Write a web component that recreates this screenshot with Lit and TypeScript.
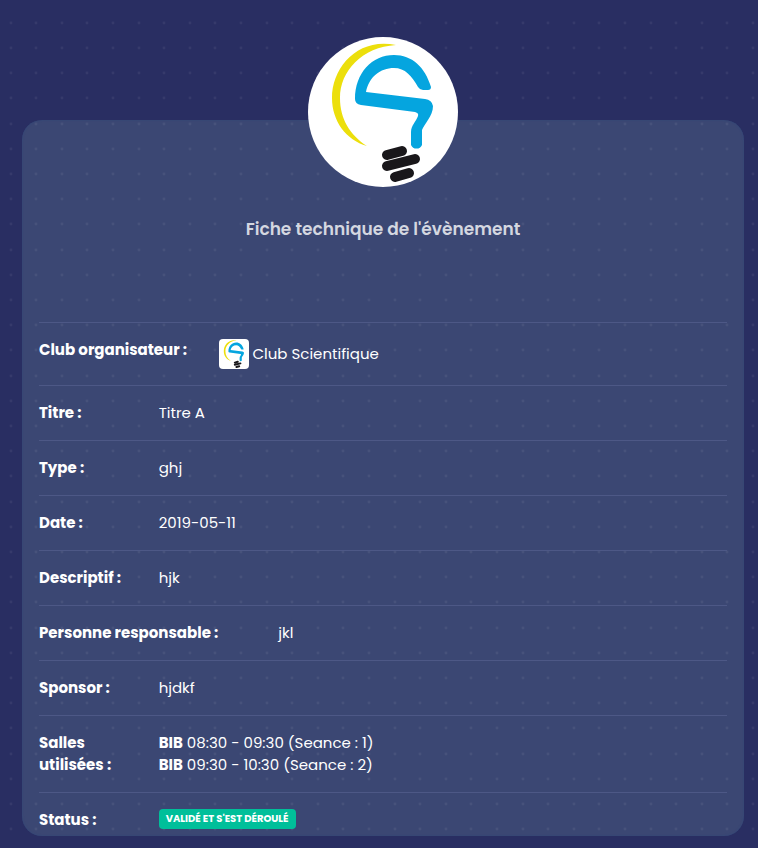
import { LitElement, html, svg, css } from "lit";
import { customElement } from "lit/decorators.js";

const DOT_X = [11, 36, 62, 87, 113];
const DOT_Y = [23, 48, 73, 98, 124];

const logo = html`<svg class="logo" viewBox="0 0 150 150" role="img" aria-label="Club Scientifique">
  <rect width="150" height="150" fill="#fff" />
  <path fill="#ecdf0c" d="M88 8C50 0 24 30 24 61C24 84 38 103 59 109C42 98 32 82 32 61C32 34 54 10 88 8Z" />
  <path fill="#05a5df"
    d="M123 50C117 30 104 18 86 18C64 18 47 36 47 62Q47 67 53 68L107 75Q111 76 110 79C108 85 103 88 103 95V108A6 6 0 0 0 114 108V93C116 87 125 79 125 69Q124 63 117 62L58 55C61 40 72 31 86 31C97 31 104 39 110 50Q112 53 115 53H120Q123 53 123 50Z" />
  <path fill="none" stroke="#19171a" stroke-width="10" stroke-linecap="round"
    d="M79 118L94 114M79 129L107 122M87 140L101 136" />
</svg>`;

const rows = [
  { label: "Club organisateur :", size: "c3", value: html`<span class="club">${logo}<span>Club Scientifique</span></span>` },
  { label: "Titre :", size: "c2", value: "Titre A" },
  { label: "Type :", size: "c2", value: "ghj" },
  { label: "Date :", size: "c2", value: "2019-05-11" },
  { label: "Descriptif :", size: "c2", value: "hjk" },
  { label: "Personne responsable :", size: "c4", value: "jkl" },
  { label: "Sponsor :", size: "c2", value: "hjdkf" },
  {
    label: "Salles utilisées :",
    size: "c2",
    value: html`<b>BIB</b> 08:30 - 09:30 (Seance : 1)<br /><b>BIB</b> 09:30 - 10:30 (Seance : 2)`,
  },
  { label: "Status :", size: "c2", value: html`<span class="badge">Validé et s'est déroulé</span>` },
];

@customElement("app-root")
export class AppRoot extends LitElement {
  static styles = css`
    :host {
      display: block;
      position: relative;
      min-height: 100vh;
      box-sizing: border-box;
      padding: 120px 14px 12px 22px;
      background: #292e62;
      color: #fff;
      font: 15px/22px Poppins, Inter, sans-serif;
    }
    .dots {
      position: absolute;
      inset: 0;
      width: 100%;
      height: 100%;
      pointer-events: none;
    }
    .card {
      display: flex;
      flex-direction: column;
      border-radius: 20px;
      padding: 0 17px 5px;
      background: #3b4773;
      box-shadow: inset 0 0 2px #30497b;
    }
    /* The dotted pattern lies over the card's fill; the content sits above it. */
    .head,
    .list {
      position: relative;
    }
    .avatar {
      width: 150px;
      height: 150px;
      margin: 0 auto;
      border-radius: 50%;
      overflow: hidden;
    }
    .head {
      display: flex;
      flex-direction: column;
      margin-top: -83px;
      padding-bottom: 81px;
    }
    .logo {
      display: block;
      width: 100%;
      height: 100%;
    }
    h1 {
      margin: 30px 0 0;
      font-size: 17px;
      line-height: 24px;
      font-weight: 600;
      text-align: center;
      color: #d4d7e0;
    }
    .list {
      margin: 0;
    }
    .row {
      display: flex;
      border-top: 1px solid #4d5886;
      padding: 16px 0;
    }
    .row:last-child {
      padding-bottom: 0;
    }
    dt {
      box-sizing: border-box;
      flex: none;
      padding-right: 20px;
      font-weight: 700;
    }
    dd {
      margin: 0;
    }
    .c2 {
      width: calc((100% + 30px) / 6);
    }
    .c3 {
      width: calc((100% + 30px) / 4);
    }
    .c4 {
      width: calc((100% + 30px) / 3);
    }
    .club {
      display: flex;
      align-items: center;
      gap: 4px;
    }
    .club .logo {
      width: 30px;
      height: 30px;
      border-radius: 4px;
    }
    .badge {
      display: block;
      padding: 0 7px;
      border-radius: 4px;
      background: #00bf9a;
      font-size: 10px;
      line-height: 20px;
      font-weight: 700;
      text-transform: uppercase;
    }
  `;

  render() {
    return html`
      <svg class="dots" aria-hidden="true">
        <defs>
          <pattern id="grid" width="128" height="126" patternUnits="userSpaceOnUse">
            ${DOT_Y.map((y) => DOT_X.map((x) => svg`<circle cx=${x} cy=${y} r="1.4" fill="#fff" fill-opacity="0.06" />`))}
          </pattern>
        </defs>
        <rect width="100%" height="100%" fill="url(#grid)" />
      </svg>
      <main class="card">
        <header class="head">
          <div class="avatar">${logo}</div>
          <h1>Fiche technique de l'évènement</h1>
        </header>
        <dl class="list">
          ${rows.map(
            (r) => html`<div class="row">
              <dt class=${r.size}>${r.label}</dt>
              <dd>${r.value}</dd>
            </div>`
          )}
        </dl>
      </main>
    `;
  }
}
